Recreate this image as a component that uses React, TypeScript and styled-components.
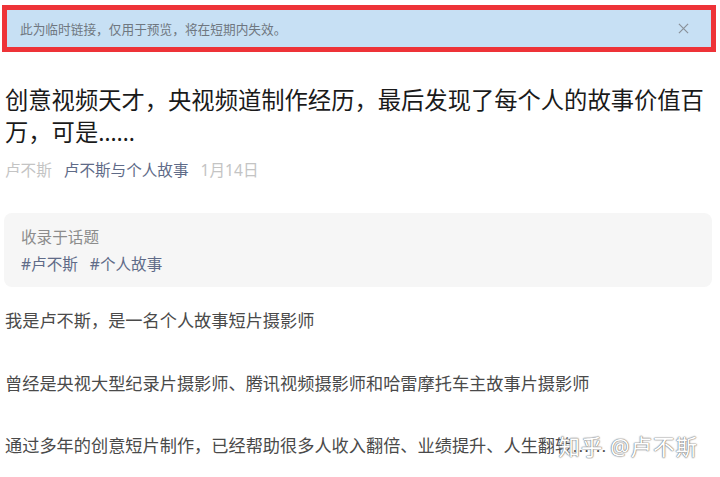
import React from 'react'
import styled, { createGlobalStyle } from 'styled-components'

const Global = createGlobalStyle`
  body {
    margin: 0;
    background: #fff;
    font-family: "Noto Sans", "Noto Sans CJK SC", sans-serif;
  }
`

const Page = styled.div`
  width: 720px;
  padding: 5px 4px 0 5px;
  box-sizing: border-box;
`

const Notice = styled.div`
  margin-left: -3px;
  width: 714px;
  height: 47px;
  box-sizing: border-box;
  border: 5px solid #ee3338;
  background: #c7e0f4;
  display: flex;
  align-items: center;
  justify-content: space-between;
  padding: 0 22px 0 13px;
  font-size: 12.7px;
  color: #6f7780;
`

const Close = styled.svg`
  width: 11px;
  height: 11px;
`

const Title = styled.h1`
  margin: 32px 0 0;
  font-size: 23.3px;
  line-height: 32px;
  font-weight: 400;
  color: #1a1a1a;
  letter-spacing: 0;
`

const Meta = styled.div`
  margin-top: 12px;
  display: flex;
  gap: 12px;
  font-size: 15.6px;
  line-height: 20px;
`

const MetaItem = styled.span<{ $link?: boolean }>`
  color: ${({ $link }) => ($link ? '#5f6b88' : '#c4c4c4')};
`

const Card = styled.div`
  margin: 33px 4px 0 -1px;
  padding: 13px 17px 12px;
  background: #f6f6f6;
  border-radius: 8px;
`

const CardLabel = styled.div`
  font-size: 15.6px;
  line-height: 22px;
  color: #8c8c8c;
  margin-bottom: 5px;
`

const Tags = styled.div`
  display: flex;
  gap: 12px;
  font-size: 15.6px;
  line-height: 22px;
  color: #5f6b88;
`

const Body = styled.div`
  position: relative;
  margin-top: 23px;
`

const Para = styled.p`
  margin: 0 0 38.5px;
  font-family: "Liberation Serif", "Noto Sans CJK SC", serif;
  font-size: 17.2px;
  line-height: 24px;
  color: #4a4a4a;
  white-space: nowrap;
  overflow: hidden;

  &:last-of-type {
    margin-bottom: 0;
  }
`

const Watermark = styled.span`
  position: absolute;
  right: 18px;
  bottom: -2px;
  font-size: 21.5px;
  line-height: 28px;
  color: #fff;
  letter-spacing: 1px;
  text-shadow: 0 0 1px #777, 0 0 1px #777, 0 0 2px #999;
`

export default function App() {
  return (
    <Page>
      <Global />
      <Notice>
        <span>此为临时链接，仅用于预览，将在短期内失效。</span>
        <Close viewBox="0 0 12 12">
          <path d="M1 1 L11 11 M11 1 L1 11" stroke="#8a9199" strokeWidth="1.3" fill="none" />
        </Close>
      </Notice>
      <Title>创意视频天才，央视频道制作经历，最后发现了每个人的故事价值百万，可是……</Title>
      <Meta>
        <MetaItem>卢不斯</MetaItem>
        <MetaItem $link>卢不斯与个人故事</MetaItem>
        <MetaItem>1月14日</MetaItem>
      </Meta>
      <Card>
        <CardLabel>收录于话题</CardLabel>
        <Tags>
          <span>#卢不斯</span>
          <span>#个人故事</span>
        </Tags>
      </Card>
      <Body>
        <Para>我是卢不斯，是一名个人故事短片摄影师</Para>
        <Para>曾经是央视大型纪录片摄影师、腾讯视频摄影师和哈雷摩托车主故事片摄影师</Para>
        <Para>通过多年的创意短片制作，已经帮助很多人收入翻倍、业绩提升、人生翻转……</Para>
        <Watermark>知乎 @卢不斯</Watermark>
      </Body>
    </Page>
  )
}
